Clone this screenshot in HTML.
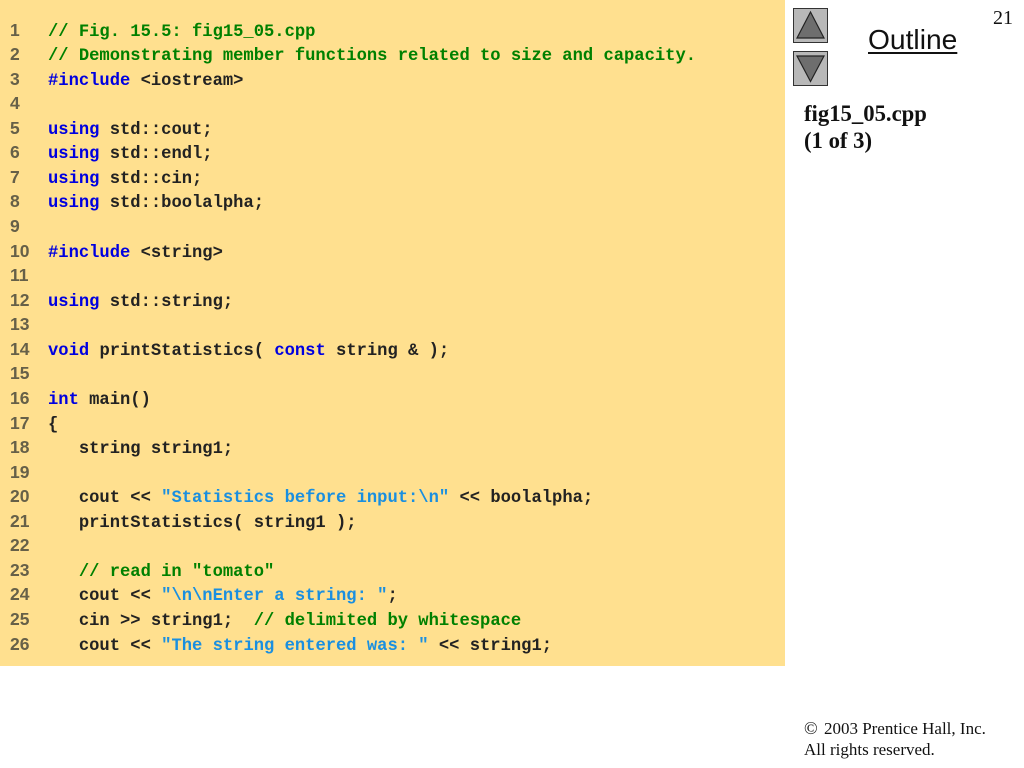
<!DOCTYPE html>
<html>
<head>
<meta charset="utf-8">
<style>
html,body{margin:0;padding:0;background:#fff;width:1024px;height:768px;overflow:hidden}
#code{position:absolute;left:0;top:0;width:785px;height:666px;background:#FFE08F}
.l{position:absolute;left:48px;margin-top:1.5px;font:bold 17.15px/24px "Liberation Mono",monospace;color:#222;white-space:pre}
.n{position:absolute;left:10px;margin-top:-0.5px;font:bold 17.5px/24px "Liberation Sans",sans-serif;color:#666048}
.c{color:#008000}.k{color:#0000e0}.s{color:#1a8fe0}
.t{position:absolute;font-family:"Liberation Serif",serif;color:#111;white-space:pre}
</style>
</head>
<body>
<div id="code">
<div class="n" style="top:18px">1</div><div class="l" style="top:19px"><span class="c">// Fig. 15.5: fig15_05.cpp</span></div>
<div class="n" style="top:42.6px">2</div><div class="l" style="top:43.6px"><span class="c">// Demonstrating member functions related to size and capacity.</span></div>
<div class="n" style="top:67.1px">3</div><div class="l" style="top:68.1px"><span class="k">#include</span> &lt;iostream&gt;</div>
<div class="n" style="top:91.7px">4</div>
<div class="n" style="top:116.2px">5</div><div class="l" style="top:117.2px"><span class="k">using</span> std::cout;</div>
<div class="n" style="top:140.8px">6</div><div class="l" style="top:141.8px"><span class="k">using</span> std::endl;</div>
<div class="n" style="top:165.4px">7</div><div class="l" style="top:166.4px"><span class="k">using</span> std::cin;</div>
<div class="n" style="top:189.9px">8</div><div class="l" style="top:190.9px"><span class="k">using</span> std::boolalpha;</div>
<div class="n" style="top:214.5px">9</div>
<div class="n" style="top:239px">10</div><div class="l" style="top:240px"><span class="k">#include</span> &lt;string&gt;</div>
<div class="n" style="top:263.6px">11</div>
<div class="n" style="top:288.2px">12</div><div class="l" style="top:289.2px"><span class="k">using</span> std::string;</div>
<div class="n" style="top:312.7px">13</div>
<div class="n" style="top:337.3px">14</div><div class="l" style="top:338.3px"><span class="k">void</span> printStatistics( <span class="k">const</span> string &amp; );</div>
<div class="n" style="top:361.8px">15</div>
<div class="n" style="top:386.4px">16</div><div class="l" style="top:387.4px"><span class="k">int</span> main()</div>
<div class="n" style="top:411px">17</div><div class="l" style="top:412px">{</div>
<div class="n" style="top:435.5px">18</div><div class="l" style="top:436.5px">   string string1;</div>
<div class="n" style="top:460.1px">19</div>
<div class="n" style="top:484.6px">20</div><div class="l" style="top:485.6px">   cout &lt;&lt; <span class="s">"Statistics before input:\n"</span> &lt;&lt; boolalpha;</div>
<div class="n" style="top:509.2px">21</div><div class="l" style="top:510.2px">   printStatistics( string1 );</div>
<div class="n" style="top:533.8px">22</div>
<div class="n" style="top:558.3px">23</div><div class="l" style="top:559.3px">   <span class="c">// read in "tomato"</span></div>
<div class="n" style="top:582.9px">24</div><div class="l" style="top:583.9px">   cout &lt;&lt; <span class="s">"\n\nEnter a string: "</span>;</div>
<div class="n" style="top:607.4px">25</div><div class="l" style="top:608.4px">   cin &gt;&gt; string1;  <span class="c">// delimited by whitespace</span></div>
<div class="n" style="top:632px">26</div><div class="l" style="top:633px">   cout &lt;&lt; <span class="s">"The string entered was: "</span> &lt;&lt; string1;</div>
</div>
<svg style="position:absolute;left:793px;top:8px" width="36" height="79" viewBox="0 0 36 79">
<rect x=".5" y=".5" width="34" height="34" fill="#b8b8b8" stroke="#333"/>
<path d="M17.5 4 L31 30 L4 30 Z" fill="#6e6e6e" stroke="#222" stroke-width="1.2"/>
<rect x=".5" y="43.5" width="34" height="34" fill="#b8b8b8" stroke="#333"/>
<path d="M17.5 73.5 L31 48 L4 48 Z" fill="#6e6e6e" stroke="#222" stroke-width="1.2"/>
</svg>
<div class="t" style="left:868px;top:22px;font:28.2px/34px 'Liberation Sans',sans-serif;color:#111;text-decoration:underline;text-decoration-thickness:2px;text-underline-offset:3px">Outline</div>
<div class="t" style="left:993px;top:7px;font-size:20px;line-height:23px">21</div>
<div class="t" style="left:804px;top:100px;font-size:22.7px;line-height:27px;font-weight:bold">fig15_05.cpp
(1 of 3)</div>
<div class="t" style="left:804px;top:717.5px;font-size:17px;line-height:21.5px"><span style="font-size:18px;margin-right:2px">©</span> 2003 Prentice Hall, Inc.
All rights reserved.</div>
</body>
</html>
